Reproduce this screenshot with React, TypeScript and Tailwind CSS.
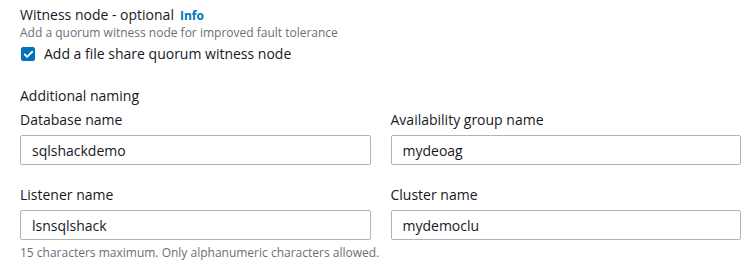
import { Check } from "lucide-react"

const fields = [
  [
    { label: "Database name", value: "sqlshackdemo" },
    { label: "Availability group name", value: "mydeoag" },
  ],
  [
    { label: "Listener name", value: "lsnsqlshack", hint: "15 characters maximum. Only alphanumeric characters allowed." },
    { label: "Cluster name", value: "mydemoclu" },
  ],
]

function Field({ label, value, hint }: { label: string; value: string; hint?: string }) {
  return (
    <div className="flex flex-col">
      <label className="text-[14px] leading-[20px] text-[#16191f] mb-[5px]">{label}</label>
      <input
        readOnly
        value={value}
        className="h-[30px] w-full rounded-[2px] border border-[#aab7b8] bg-white px-[11px] text-[14px] text-[#16191f] outline-none"
      />
      {hint && (
        <div className="mt-[5px] whitespace-nowrap text-[12px] leading-[16px] text-[#687078]">{hint}</div>
      )}
    </div>
  )
}

export default function App() {
  return (
    <div
      className="min-h-[278px] w-[754px] bg-white px-[20px] pt-[5px] text-[#16191f]"
      style={{ fontFamily: '"Open Sans", "Noto Sans", Arial, sans-serif' }}
    >
      <div className="flex items-baseline gap-[6px] text-[14px] leading-[20px]">
        <span>Witness node - optional</span>
        <span className="text-[12px] font-bold text-[#0073bb]">Info</span>
      </div>
      <div className="-mt-[1px] text-[12px] leading-[16px] text-[#687078]">
        Add a quorum witness node for improved fault tolerance
      </div>
      <label className="mt-[3px] flex items-center gap-[9px] text-[14px] leading-[20px]">
        <span className="ml-[1px] flex h-[14px] w-[14px] items-center justify-center rounded-[2px] bg-[#0073bb]">
          <Check className="h-[11px] w-[11px] text-white" strokeWidth={4} />
        </span>
        <span>Add a file share quorum witness node</span>
      </label>

      <div className="mt-[22px] text-[14px] leading-[20px]">Additional naming</div>
      <div className="mt-[4px] flex w-[721px] flex-col gap-[20px]">
        {fields.map((row, i) => (
          <div key={i} className="grid grid-cols-2 gap-x-[20px]">
            {row.map((f) => (
              <Field key={f.label} {...f} />
            ))}
          </div>
        ))}
      </div>
    </div>
  )
}
